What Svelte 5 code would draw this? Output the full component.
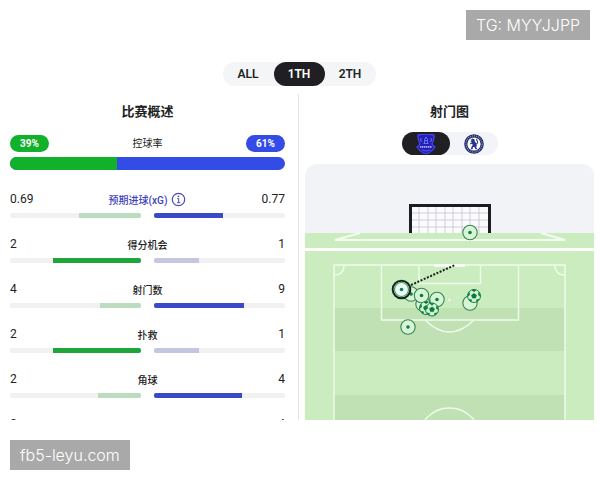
<script lang="ts">
	type Stat = { label: string; home: string; away: string; homeBar: number; awayBar: number; info?: boolean };

	const periods = ['ALL', '1TH', '2TH'];
	let period = $state('1TH');
	let team = $state('everton');

	const possession = { home: 39, away: 61 };

	// bar values are percentages of each half track
	const stats: Stat[] = [
		{ label: '预期进球(xG)', home: '0.69', away: '0.77', homeBar: 47, awayBar: 53, info: true },
		{ label: '得分机会', home: '2', away: '1', homeBar: 67, awayBar: 34 },
		{ label: '射门数', home: '4', away: '9', homeBar: 31, awayBar: 69 },
		{ label: '扑救', home: '2', away: '1', homeBar: 67, awayBar: 34 },
		{ label: '角球', home: '2', away: '4', homeBar: 33, awayBar: 67 },
		{ label: '犯规', home: '2', away: '4', homeBar: 33, awayBar: 67 }
	];

	const shots = [
		{ x: 118, y: 140, kind: 'empty' },
		{ x: 106, y: 130, kind: 'dot' },
		{ x: 116.5, y: 131.5, kind: 'dot' },
		{ x: 132, y: 135.5, kind: 'dot' },
		{ x: 121, y: 144, kind: 'ball' },
		{ x: 127, y: 145.5, kind: 'ball' },
		{ x: 165, y: 139, kind: 'empty' },
		{ x: 169, y: 132, kind: 'ball' },
		{ x: 103, y: 163, kind: 'dot' },
		{ x: 165, y: 68.5, kind: 'dot' }
	];
</script>

<a class="tag contact" href="#contact">TG: MYYJJPP</a>

<div class="page">
	<main>
		<nav class="periods">
			{#each periods as p}
				<button class:active={period === p} onclick={() => (period = p)}>{p}</button>
			{/each}
		</nav>

		<div class="columns">
			<section class="overview">
				<h2>比赛概述</h2>

				<div class="possession">
					<span class="pill home">{possession.home}%</span>
					<span>控球率</span>
					<span class="pill away">{possession.away}%</span>
				</div>
				<div class="possession-bar">
					<div class="home" style="width: {possession.home}%"></div>
				</div>

				{#each stats as stat}
					<div class="stat">
						<div class="values">
							<span class="num">{stat.home}</span>
							<span class="label" class:info={stat.info}>
								{stat.label}
								{#if stat.info}
									<svg width="15" height="15" viewBox="0 0 15 15">
										<circle cx="7.5" cy="7.5" r="6.2" fill="none" stroke="#4b4bb0" stroke-width="1.2" />
										<path d="M6.2 6.5h1.5v4M6 10.7h3.3" fill="none" stroke="#4b4bb0" />
										<circle cx="7.4" cy="4.3" r="0.9" fill="#4b4bb0" />
									</svg>
								{/if}
							</span>
							<span class="num right">{stat.away}</span>
						</div>
						<div class="bars">
							<div class="track left">
								<div class="fill home" class:faded={stat.homeBar < 50} style="width: {stat.homeBar}%"></div>
							</div>
							<div class="track">
								<div class="fill away" class:faded={stat.awayBar < 50} style="width: {stat.awayBar}%"></div>
							</div>
						</div>
					</div>
				{/each}
			</section>

			<section class="shotmap">
				<h2>射门图</h2>

				<div class="teams">
					<button aria-label="Everton" class:active={team === 'everton'} onclick={() => (team = 'everton')}>
						<svg width="20" height="20" viewBox="0 0 20 20">
							<path d="M2 1Q10-1 18 1Q18.500 5 16 10Q17 12 19 13Q15 19 10 20Q5 19 1 13Q3 12 4 10Q1.500 5 2 1Z" fill="#2220b4" stroke="#4644ec" stroke-width="1.300" />
							<path d="M8.500 9V5.500L10 3L11.500 5.500V9M7.500 9.500H12.500M9 6.500H11M5 4Q4 6 5.500 8M15 4Q16 6 14.500 8" fill="none" stroke="#7a78ff" stroke-width="0.900" />
							<path d="M4 12.800H16" stroke="#a9a8ff" stroke-width="1.800" stroke-dasharray="1.500 0.500" />
							<path d="M6 16Q10 18 14 16" fill="none" stroke="#5a58f0" />
						</svg>
					</button>
					<button aria-label="Chelsea" class:active={team === 'chelsea'} onclick={() => (team = 'chelsea')}>
						<svg width="20" height="20" viewBox="0 0 20 20">
							<circle cx="10" cy="10" r="9.800" fill="#232c66" />
							<circle cx="10" cy="10" r="8.100" fill="none" stroke="#8f95bd" stroke-width="1.300" stroke-dasharray="1 1" />
							<circle cx="10" cy="10" r="6.600" fill="#fff" />
							<path d="M6.500 6L8.500 4.500L10.500 5.200L10.800 7.500L12.500 9.500L12.800 12L12 13L13.500 15.200H11.500L10.200 12.800L9 13.200L8.500 15.200H6.800L7.600 12.600L8.800 11L8 9.800L5.800 10.500L6.200 9.200L8 8.300L6 8L7.800 7Z" fill="#25358a" />
							<path d="M12.500 10Q14.500 8.500 13.200 7Q12 6 13 4.800" fill="none" stroke="#25358a" stroke-width="1.100" />
						</svg>
					</button>
				</div>

				<svg class="pitch" viewBox="0 0 289 300">
					<defs>
						<g id="ball">
							<circle r="6.500" fill="#d3f3d2" stroke="#1c8547" stroke-width="1" />
							<path d="M0-2.600L2.500-0.800L1.500 2.100H-1.500L-2.500-0.800ZM-2-6L2-6L0-4.200ZM5-3.800L6.200 0.200L4.200-1.200ZM-5-3.800L-6.200 0.200L-4.200-1.200ZM2.500 3.800L5 3.400L2.800 5.800ZM-2.500 3.800L-5 3.400L-2.800 5.800Z" fill="#08793a" stroke="#08793a" stroke-width="0.600" />
						</g>
					</defs>

					<rect width="289" height="300" fill="#f2f3f7" />
					<rect y="69" width="289" height="231" fill="#cbecbe" />
					<rect x="29" y="144" width="231" height="43" fill="#bfe1b4" />
					<rect x="29" y="231" width="231" height="69" fill="#bfe1b4" />

					<!-- goal -->
					<rect x="105" y="42" width="79" height="27" fill="#fbfbfd" />
					<path d="M114 42V69M123 42V69M131 42V69M140 42V69M148 42V69M157 42V69M165 42V69M174 42V69M106 49H183M106 56H183M106 63H183" stroke="#c5c6cb" stroke-width="0.800" />
					<path d="M105.500 69V41.500H184.500V69" fill="none" stroke="#1c1c24" stroke-width="3" />

					<!-- ground in front of the goal -->
					<path d="M55 69L30 76H260L236 69" fill="none" stroke="#f4fcf1" stroke-width="2" />
					<rect y="84" width="289" height="3" fill="#fff" />

					<!-- pitch lines -->
					<g fill="none" stroke="#f1fbed" stroke-width="1.400">
						<path d="M29 300V101H260V300M76.500 101V156H213.500V101M114 101V119.500H175.500V101" />
						<path d="M120 156Q144.500 180 169 156M39 101Q39 111 29 111M250 101Q250 111 260 111" />
						<circle cx="144.500" cy="275" r="31" />
					</g>
					<path d="M129 101.500H160" stroke="#fff" stroke-width="2.500" />
					<circle cx="144.500" cy="136" r="1.200" fill="#f1fbed" />

					{#each shots as shot}
						<g transform="translate({shot.x} {shot.y})">
							{#if shot.kind === 'ball'}
								<use href="#ball" />
							{:else}
								<circle r="7.200" fill="#d5f5d5" stroke="#3d8159" stroke-width="1.100" />
								{#if shot.kind === 'dot'}
									<circle r="1.800" fill="#127a42" />
								{/if}
							{/if}
						</g>
					{/each}

					<!-- selected shot -->
					<path d="M106 121L150 101" stroke="#17231a" stroke-width="2" stroke-dasharray="2 1.500" />
					<circle cx="96.500" cy="125.500" r="8.800" fill="#edfbee" stroke="#14251d" stroke-width="2" />
					<circle cx="96.500" cy="125.500" r="7" fill="none" stroke="#4c9a76" stroke-width="1.200" />
					<circle cx="96.500" cy="125.500" r="1.800" fill="#127a6a" />
				</svg>
			</section>
		</div>
	</main>

	<footer>
		<a class="tag" href="#home">fb5-leyu.com</a>
	</footer>
</div>

<style>
	:global(body) {
		background: #fff;
		color: #222;
		font-family: Roboto, 'Noto Sans CJK SC', sans-serif;
		font-size: 12px;
	}
	.page {
		height: 100vh;
		display: flex;
		flex-direction: column;
	}
	main {
		flex: 1;
		min-height: 0;
		display: flex;
		flex-direction: column;
		padding: 62px 2px 0 0;
		box-sizing: border-box;
		overflow: hidden;
	}
	footer {
		display: flex;
		padding: 20px 10px 10px;
	}
	.tag {
		background: #a9a9a9;
		color: #fff;
		font: 300 16px/30px Inter, sans-serif;
		padding: 0 10px;
		text-decoration: none;
	}
	.contact {
		position: absolute;
		top: 10px;
		right: 10px;
	}
	button {
		border: 0;
		padding: 0;
		background: none;
		color: inherit;
		font: inherit;
		cursor: pointer;
	}
	.periods {
		display: flex;
		align-self: center;
		margin-bottom: 8px;
		border-radius: 12px;
		background: #f3f5f7;
	}
	.periods button {
		width: 51px;
		height: 24px;
		border-radius: 12px;
		font-weight: 600;
	}
	button.active {
		background: #1f1f24;
		color: #fff;
	}
	.columns {
		flex: 1;
		min-height: 0;
		display: grid;
		grid-template-columns: 1fr 1fr;
	}
	.overview {
		padding: 0 13px 0 10px;
		border-right: 1px solid #e4e4e6;
	}
	.shotmap {
		display: flex;
		flex-direction: column;
		padding: 0 4px 0 6px;
	}
	h2 {
		margin: 8px 0 10px;
		font-size: 13px;
		line-height: 20px;
		font-weight: 600;
		text-align: center;
	}
	.possession {
		display: flex;
		justify-content: space-between;
		align-items: center;
		margin-top: 13px;
		font-size: 10px;
		line-height: 17px;
	}
	.pill {
		width: 39px;
		border-radius: 9px;
		color: #fff;
		font-weight: 700;
		text-align: center;
	}
	.pill.away,
	.possession-bar {
		background: #344ce6;
	}
	.pill.home,
	.possession-bar .home {
		background: #12b12c;
	}
	.possession-bar {
		height: 13px;
		margin: 5px 0 20px;
		border-radius: 7px;
		overflow: hidden;
	}
	.possession-bar .home {
		height: 100%;
	}
	.stat {
		height: 45px;
	}
	.values {
		display: grid;
		grid-template-columns: 1fr auto 1fr;
		align-items: center;
		height: 18px;
		margin-bottom: 5px;
	}
	.num {
		font-size: 12px;
	}
	.right {
		text-align: right;
	}
	.label {
		display: flex;
		align-items: center;
		gap: 4px;
		font-size: 10px;
		font-weight: 500;
	}
	.info {
		color: #3d41bd;
	}
	.bars {
		display: grid;
		grid-template-columns: 1fr 1fr;
		gap: 13px;
	}
	.track {
		display: flex;
		height: 5px;
		border-radius: 2px;
		background: #f1f1f2;
		overflow: hidden;
	}
	.left {
		justify-content: flex-end;
	}
	.fill.home {
		background: #1fa539;
	}
	.fill.away {
		background: #3949c8;
	}
	.fill.home.faded {
		background: #bcdcc0;
	}
	.fill.away.faded {
		background: #c5c6e2;
	}
	.teams {
		display: flex;
		align-self: center;
		margin-bottom: 9px;
		border-radius: 12px;
		background: #f3f4f8;
	}
	.teams button {
		display: flex;
		align-items: center;
		justify-content: center;
		width: 48px;
		height: 23px;
		border-radius: 12px;
	}
	.pitch {
		display: block;
		width: 100%;
		border-radius: 12px 12px 0 0;
	}
</style>
